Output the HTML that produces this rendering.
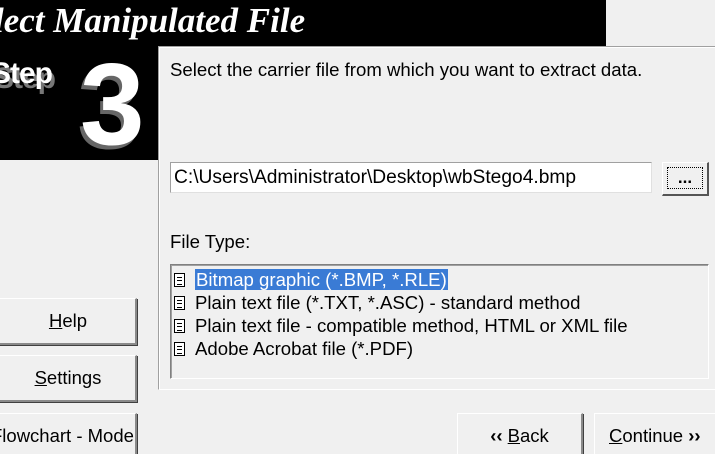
<!DOCTYPE html>
<html><head><meta charset="utf-8"><style>
*{margin:0;padding:0;box-sizing:border-box}
html,body{width:715px;height:454px;overflow:hidden}
body{background:#f0f0f0;position:relative;font-family:"Liberation Sans",Arial,sans-serif;color:#000}
.abs{position:absolute}
.btn{position:absolute;background:#f0f0f0;border:1px solid #fff;border-right:2px solid #8a8a8a;border-bottom:2px solid #8a8a8a;box-shadow:1px 1px 0 #404040;font-size:18.5px;text-align:center;white-space:nowrap}
u{text-decoration:underline}
.ico{display:inline-block;width:11px;height:14px;border:1.5px solid #000;background:#fff;vertical-align:-1px;margin-right:10px;position:relative}
.ico:after{content:"";position:absolute;left:2px;top:3px;width:5px;height:6px;border-top:1.5px solid #000;border-bottom:1.5px solid #000}
.ico:before{content:"";position:absolute;left:2px;top:6px;width:5px;border-top:1.5px solid #000}
.item{height:23px;line-height:23px;font-size:18.6px;white-space:nowrap;padding-left:3px}
</style></head><body>
<div class="abs" style="left:0;top:0;width:715px;height:454px;overflow:hidden">
<div class="abs" style="left:0;top:0;width:606px;height:47px;background:#000"></div>
<div class="abs" style="left:0;top:47px;width:158px;height:113px;background:#000"></div>
<div class="abs" style="left:-41px;top:1px;font-family:'Liberation Serif',serif;font-style:italic;font-weight:bold;font-size:35px;color:#fff;white-space:nowrap">Select Manipulated File</div>
<div class="abs" style="left:-9px;top:57px;font-weight:bold;font-size:30px;color:#fff;text-shadow:3px 5px 0 #777;letter-spacing:-1px">Step</div>
<div class="abs" style="left:80px;top:41px;font-weight:bold;font-size:116px;color:#fff;text-shadow:-3px 4px 0 #666;line-height:1.1">3</div>
<div class="abs" style="left:158px;top:46px;width:557px;height:344px;border-top:1px solid #a0a0a0;border-left:1px solid #a0a0a0;border-bottom:1px solid #fff;box-shadow:inset 1px 1px 0 #fff"></div>
<div class="abs" style="left:170px;top:59px;font-size:18.6px;white-space:nowrap">Select the carrier file from which you want to extract data.</div>
<div class="abs" style="left:170px;top:162px;width:482px;height:31px;background:#fff;border:1px solid #a0a0a0;border-right-color:#e0e0e0;border-bottom-color:#e0e0e0;font-size:19.2px;line-height:29px;padding-left:3px;white-space:nowrap">C:\Users\Administrator\Desktop\wbStego4.bmp</div>
<div class="abs" style="left:662px;top:162px;width:47px;height:34px;border:1px solid #fff;border-right:2px solid #555;border-bottom:2px solid #555;background:#f0f0f0"><div style="margin:4px;height:22px;border:1px dotted #000;text-align:center;font-weight:bold;font-size:17px;line-height:20px">...</div></div>
<div class="abs" style="left:170px;top:231px;font-size:18.6px">File Type:</div>
<div class="abs" style="left:170px;top:264px;width:539px;height:115px;border:1px solid #808080;border-right-color:#fff;border-bottom-color:#fff;box-shadow:inset 1px 1px 0 #a0a0a0;padding-top:3px">
<div class="item"><span class="ico"></span><span style="background:#3a7bd5;color:#fff;padding:0 1px">Bitmap graphic (*.BMP, *.RLE)</span></div>
<div class="item"><span class="ico"></span>Plain text file (*.TXT, *.ASC) - standard method</div>
<div class="item"><span class="ico"></span>Plain text file - compatible method, HTML or XML file</div>
<div class="item"><span class="ico"></span>Adobe Acrobat file (*.PDF)</div>
</div>
<div class="btn" style="left:-10px;top:298px;width:147px;height:47px;line-height:44px;padding-left:10px"><u>H</u>elp</div>
<div class="btn" style="left:-10px;top:355px;width:147px;height:47px;line-height:44px;padding-left:10px"><u>S</u>ettings</div>
<div class="btn" style="left:-10px;top:413px;width:147px;height:47px;line-height:44px;text-align:right;padding-right:8px;overflow:hidden">Flowchart - Mode</div>
<div class="btn" style="left:457px;top:413px;width:126px;height:47px;line-height:44px"><b>‹‹</b> <u>B</u>ack</div>
<div class="btn" style="left:594px;top:413px;width:125px;height:47px;line-height:44px;text-align:left;padding-left:14px"><u>C</u>ontinue <b>››</b></div>
</div>
</body></html>
